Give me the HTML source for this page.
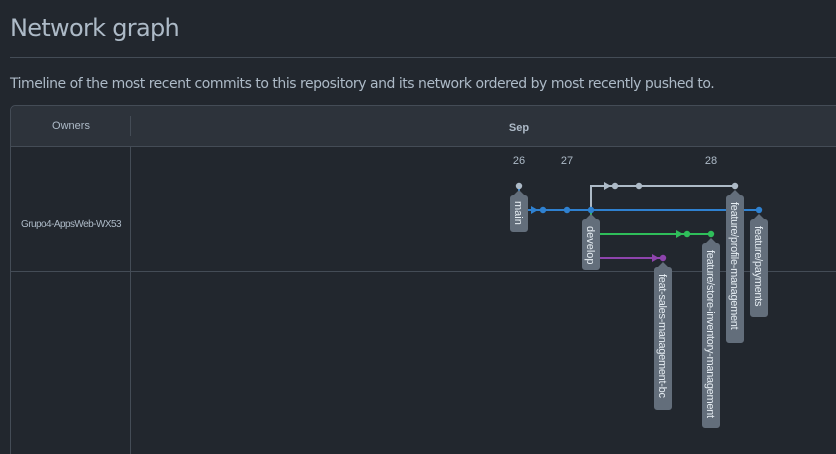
<!DOCTYPE html>
<html><head><style>
body{margin:0;background:#22272e;width:836px;height:454px;overflow:hidden;font-family:"Liberation Sans",sans-serif;color:#adbac7}
h1{position:absolute;left:10px;top:14px;margin:0;font-weight:400;font-size:24px;font-family:"DejaVu Sans","Liberation Sans",sans-serif;color:#adbac7;letter-spacing:-0.7px}
.hr{position:absolute;left:10px;top:57px;width:826px;height:1px;background:#444c56}
p{position:absolute;left:10px;top:76px;margin:0;font-size:14px;font-family:"DejaVu Sans","Liberation Sans",sans-serif;color:#adbac7;letter-spacing:-0.48px;white-space:nowrap}
</style></head><body>
<h1>Network graph</h1>
<div class="hr"></div>
<p>Timeline of the most recent commits to this repository and its network ordered by most recently pushed to.</p>
<svg style="position:absolute;left:0;top:0" width="836" height="454" font-family="Liberation Sans, sans-serif">
<rect x="10.5" y="105.5" width="840" height="360" rx="5" fill="#22272e" stroke="#444c56"/>
<path d="M11 146 V111 a5 5 0 0 1 5 -5 H836 V146 Z" fill="#2d333b"/>
<line x1="10" y1="146.5" x2="836" y2="146.5" stroke="#444c56"/>
<line x1="130.5" y1="146" x2="130.5" y2="454" stroke="#444c56"/>
<line x1="130.5" y1="116" x2="130.5" y2="136" stroke="#444c56"/>
<line x1="10" y1="271.5" x2="836" y2="271.5" stroke="#444c56"/>
<text x="71" y="129" font-size="11" fill="#adbac7" text-anchor="middle">Owners</text>
<text x="519" y="131" font-size="11" font-weight="bold" fill="#adbac7" text-anchor="middle">Sep</text>
<text x="71" y="227" font-size="10" fill="#adbac7" text-anchor="middle" letter-spacing="-0.55">Grupo4-AppsWeb-WX53</text>
<g font-size="11" fill="#adbac7" text-anchor="middle">
<text x="519" y="164">26</text><text x="567" y="164">27</text><text x="711" y="164">28</text>
</g>
<g fill="none" stroke-width="2">
<path d="M591 210 V186 H735" stroke="#adbac7"/>
<path d="M519 186 V210 H759" stroke="#2f81d0"/>
<path d="M591 210 V234 H711" stroke="#2fbe5a"/>
<path d="M591 234 V258 H663" stroke="#8e44ad"/>
</g>
<path d="M604 182 l7 4 -7 4z" fill="#adbac7"/>
<path d="M531 206 l7 4 -7 4z" fill="#2f81d0"/>
<path d="M676 230 l7 4 -7 4z" fill="#2fbe5a"/>
<path d="M652 254 l7 4 -7 4z" fill="#8e44ad"/>
<g fill="#adbac7"><circle cx="519" cy="186" r="3.2"/><circle cx="615" cy="186" r="3.2"/><circle cx="639" cy="186" r="3.2"/><circle cx="735" cy="186" r="3.2"/></g>
<g fill="#2f81d0"><circle cx="543" cy="210" r="3.2"/><circle cx="567" cy="210" r="3.2"/><circle cx="591" cy="210" r="3.2"/><circle cx="759" cy="210" r="3.2"/></g>
<g fill="#2fbe5a"><circle cx="687" cy="234" r="3.2"/><circle cx="711" cy="234" r="3.2"/></g>
<circle cx="663" cy="258" r="3.2" fill="#8e44ad"/>
<g fill="#636e7b">
<path d="M519 190 l5 5 h1 a3 3 0 0 1 3 3 v31 a3 3 0 0 1 -3 3 h-12 a3 3 0 0 1 -3 -3 v-31 a3 3 0 0 1 3 -3 h1z"/>
<path d="M591 214 l5 5 h1 a3 3 0 0 1 3 3 v45 a3 3 0 0 1 -3 3 h-12 a3 3 0 0 1 -3 -3 v-45 a3 3 0 0 1 3 -3 h1z"/>
<path d="M663 262 l5 5 h1 a3 3 0 0 1 3 3 v137 a3 3 0 0 1 -3 3 h-12 a3 3 0 0 1 -3 -3 v-137 a3 3 0 0 1 3 -3 h1z"/>
<path d="M711 238 l5 5 h1 a3 3 0 0 1 3 3 v179 a3 3 0 0 1 -3 3 h-12 a3 3 0 0 1 -3 -3 v-179 a3 3 0 0 1 3 -3 h1z"/>
<path d="M735 190 l5 5 h1 a3 3 0 0 1 3 3 v142 a3 3 0 0 1 -3 3 h-12 a3 3 0 0 1 -3 -3 v-142 a3 3 0 0 1 3 -3 h1z"/>
<path d="M759 214 l5 5 h1 a3 3 0 0 1 3 3 v92 a3 3 0 0 1 -3 3 h-12 a3 3 0 0 1 -3 -3 v-92 a3 3 0 0 1 3 -3 h1z"/>
</g>
<g font-size="11" fill="#e6edf3">
<text transform="translate(515 201) rotate(90)">main</text>
<text transform="translate(587 226) rotate(90)">develop</text>
<text transform="translate(659 274) rotate(90)" letter-spacing="-0.3">feat-sales-management-bc</text>
<text transform="translate(707 250) rotate(90)" letter-spacing="-0.3">feature/store-inventory-management</text>
<text transform="translate(731 202) rotate(90)" letter-spacing="-0.3">feature/profile-management</text>
<text transform="translate(755 226) rotate(90)" letter-spacing="-0.3">feature/payments</text>
</g>
</svg>
</body></html>
